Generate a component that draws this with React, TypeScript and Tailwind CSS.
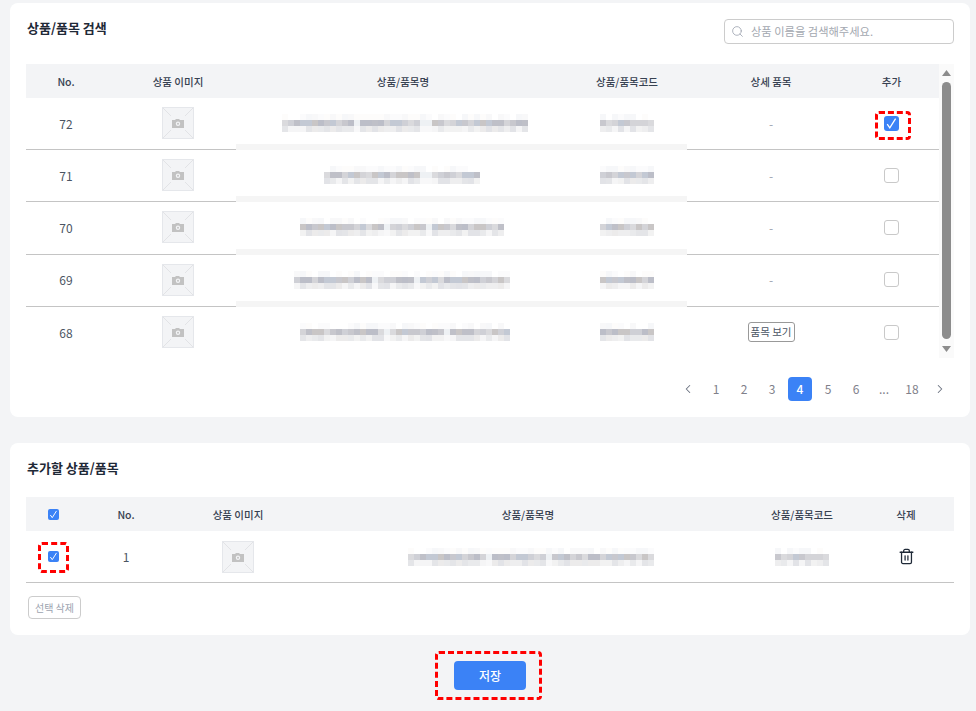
import React from 'react';
import { ChevronLeft, ChevronRight, Search, Trash2 } from 'lucide-react';

const blurColors = ['#c8c8ce', '#cfd0d6', '#bfc0c8', '#c9c6c6', '#c3c9d4', '#d4d4d8', '#bcbec8', '#dadadd'];
const blurLight = ['#e9eaec', '#eeeeef', '#e4e5e8', '#f2f2f2', '#ecebeb', '#f5f5f6', '#e2e3e7'];
const blurTop = ['#ffffff', '#fbfbfc', '#f8f8f9', '#fdfcfb', '#f6f7f9'];

// 모자이크 처리된 텍스트
const Mosaic: React.FC<{ cols: number; gaps?: number[]; seed: number }> = ({ cols, gaps = [], seed }) => {
  let s = seed;
  const next = (n: number) => {
    s = (s * 9301 + 49297) % 233280;
    return Math.floor((s / 233280) * n);
  };
  const rects: React.ReactNode[] = [];
  for (let c = 0; c < cols; c += 1) {
    const gap = gaps.includes(c);
    rects.push(<rect key={`t${c}`} x={c * 6} y={0} width={6} height={6} fill={blurTop[next(5)]} />);
    rects.push(<rect key={`m${c}`} x={c * 6} y={6} width={6} height={6} fill={gap ? '#eef1f4' : blurColors[next(8)]} />);
    rects.push(<rect key={`b${c}`} x={c * 6} y={12} width={6} height={6} fill={gap ? '#f8f8f9' : blurLight[next(7)]} />);
  }
  return (
    <svg width={cols * 6} height={18} className="block">
      {rects}
    </svg>
  );
};

const Thumb = () => (
  <svg width="32" height="32" viewBox="0 0 32 32" className="block">
    <rect x="0.5" y="0.5" width="31" height="31" fill="#f3f4f6" stroke="#e5e7eb" />
    <path d="M1 1l8 8M31 1l-8 8M1 31l8-8M31 31l-8-8" stroke="#e2e3e6" strokeWidth="1" />
    <path d="M10 13h3l1-1h3l1 1h4v8H10z" fill="#c2c2c2" />
    <circle cx="16" cy="16.8" r="2.2" fill="#f3f4f6" />
    <circle cx="16" cy="16.8" r="1" fill="#c2c2c2" />
  </svg>
);

const Check: React.FC<{ checked?: boolean; small?: boolean }> = ({ checked, small }) => {
  const size = small ? 'h-[11px] w-[11px] rounded-[2px]' : 'h-[15px] w-[15px] rounded-[3px]';
  if (!checked) {
    return <span className={`block ${size} border border-[#c9c9c9] bg-white`} />;
  }
  return (
    <span className={`flex items-center justify-center ${size} bg-[#3b82f6]`}>
      <svg viewBox="0 0 15 15" className="h-full w-full">
        <path d="M3.2 8.2l2.6 3.6L11.6 2.6" fill="none" stroke="#ffffff" strokeWidth="1.3" />
      </svg>
    </span>
  );
};

const Highlight: React.FC<{ className: string }> = ({ className }) => (
  <span className={`pointer-events-none absolute rounded-[4px] border-[3px] border-dashed border-[#ff0000] ${className}`} />
);

const rows = [
  { no: 72, cols: 41, gaps: [12, 23, 24], seed: 11, shift: 'ml-[4px]', checked: true },
  { no: 71, cols: 26, gaps: [16, 17], seed: 47, shift: 'mr-[2px]' },
  { no: 70, cols: 34, gaps: [14, 21], seed: 93, shift: 'mr-[2px]' },
  { no: 69, cols: 36, gaps: [13, 20], seed: 131, shift: 'mr-[2px]' },
  { no: 68, cols: 35, gaps: [14, 24], seed: 177, shift: 'ml-[4px]', detail: true },
];

const pages = ['1', '2', '3', '4', '5', '6', '...', '18'];

const App = () => {
  return (
    <div className="h-[711px] overflow-hidden bg-[#f3f4f6] pl-[10px] pr-[6px] pt-[3px] font-['Noto_Sans_CJK_KR','Noto_Sans',sans-serif] text-[12px] text-[#4b5563]">
      <section className="rounded-lg bg-white px-4 pb-4 pt-4">
        <div className="flex items-start justify-between">
          <h2 className="pl-[1px] text-[13px] font-bold leading-[18px] text-[#1f2937]">상품/품목 검색</h2>
          <div className="flex h-[25px] w-[230px] items-center gap-[7px] rounded-[4px] border border-[#cccccc] bg-white px-[6px]">
            <Search size={13} strokeWidth={1.5} className="text-[#9ca3af]" />
            <span className="text-[11.25px] leading-none text-[#a3a8b0]">상품 이름을 검색해주세요.</span>
          </div>
        </div>

        <div className="mt-5 flex h-[294px]">
          <div className="w-[913px]">
            <div className="grid h-[34px] grid-cols-[80px_144px_306px_142px_146px_95px] items-center bg-[#f3f4f6] pt-[1px] text-center text-[10.5px] font-medium text-[#374151]">
              <div>No.</div>
              <div>상품 이미지</div>
              <div>상품/품목명</div>
              <div>상품/품목코드</div>
              <div>상세 품목</div>
              <div>추가</div>
            </div>
            {rows.map((row, idx) => {
              const last = idx === rows.length - 1;
              return (
                <div
                  key={row.no}
                  className={`relative grid h-[52.2px] grid-cols-[80px_144px_306px_142px_146px_95px] items-center pb-[1px] text-center ${last ? '' : 'border-b border-[#c4c4c4]'}`}
                >
                  <div className="pt-[1px]">{row.no}</div>
                  <div className="flex justify-center">
                    <Thumb />
                  </div>
                  <div className="flex justify-center">
                    <div className={row.shift}>
                      <Mosaic cols={row.cols} gaps={row.gaps} seed={row.seed} />
                    </div>
                  </div>
                  <div className="flex justify-center">
                    <Mosaic cols={9} seed={row.seed + 5} />
                  </div>
                  <div className="flex justify-center">
                    {row.detail ? (
                      <button type="button" className="h-5 w-[47px] rounded-[3px] border border-[#999999] text-[10.5px] leading-none text-[#4b5563]">
                        품목 보기
                      </button>
                    ) : (
                      <span className="pt-[1px] text-[#9ca3af]">-</span>
                    )}
                  </div>
                  <div className="relative flex justify-center">
                    <Check checked={row.checked} />
                    {row.checked && <Highlight className="left-[31px] top-[-5px] h-[29px] w-[36px]" />}
                  </div>
                  {!last && <span className="absolute bottom-[-1px] left-[210px] h-[6px] w-[451px] bg-[#f5f5f5]" />}
                </div>
              );
            })}
          </div>

          <div className="flex h-[294px] w-[15px] flex-col items-center bg-[#fafafa]">
            <svg width="9" height="6" viewBox="0 0 9 6" className="mt-[6px] shrink-0">
              <path d="M4.5 0L9 6H0z" fill="#8c8c8c" />
            </svg>
            <div className="mt-[6px] h-[257px] w-[9px] shrink-0 rounded-full bg-[#8c8c8c]" />
            <svg width="9" height="6" viewBox="0 0 9 6" className="mt-[7px] shrink-0">
              <path d="M0 0h9L4.5 6z" fill="#8c8c8c" />
            </svg>
          </div>
        </div>

        <div className="mt-[19px] flex items-center justify-end gap-1 pr-[2px]">
          <span className="flex h-6 w-6 items-center justify-center text-[#6b7280]">
            <ChevronLeft size={14} strokeWidth={1.8} />
          </span>
          {pages.map((page) => (
            <span
              key={page}
              className={`flex h-6 w-6 items-center justify-center rounded-[4px] ${page === '4' ? 'bg-[#3b82f6] font-medium text-white' : 'text-[#80808a]'}`}
            >
              {page}
            </span>
          ))}
          <span className="flex h-6 w-6 items-center justify-center text-[#6b7280]">
            <ChevronRight size={14} strokeWidth={1.8} />
          </span>
        </div>
      </section>

      <section className="mt-[26px] rounded-lg bg-white px-4 pb-4 pt-4">
        <h2 className="pl-[1px] text-[13px] font-bold leading-[18px] text-[#1f2937]">추가할 상품/품목</h2>
        <div className="mt-5">
          <div className="grid h-[34px] grid-cols-[54px_92px_132px_448px_100px_102px] items-center bg-[#f3f4f6] pt-[1px] text-center text-[10.5px] font-medium text-[#374151]">
            <div className="flex justify-center">
              <Check checked small />
            </div>
            <div>No.</div>
            <div>상품 이미지</div>
            <div>상품/품목명</div>
            <div>상품/품목코드</div>
            <div className="pl-[6px]">삭제</div>
          </div>
          <div className="grid h-[52px] grid-cols-[54px_92px_132px_448px_100px_102px] items-center border-b border-[#c4c4c4] text-center">
            <div className="relative flex justify-center">
              <Check checked small />
              <Highlight className="left-[12px] top-[-9px] h-[31px] w-[31px]" />
            </div>
            <div>1</div>
            <div className="flex justify-center">
              <Thumb />
            </div>
            <div className="flex justify-center">
              <div className="ml-[6px]">
                <Mosaic cols={41} gaps={[13, 23]} seed={11} />
              </div>
            </div>
            <div className="flex justify-center">
              <Mosaic cols={9} seed={16} />
            </div>
            <div className="flex justify-center pl-[6px] text-[#1f2937]">
              <Trash2 size={17} strokeWidth={1.8} />
            </div>
          </div>
        </div>
        <button type="button" className="ml-[2px] mt-[13px] block h-[23px] w-[53px] rounded-[4px] border border-[#cccccc] text-[10px] leading-none text-[#9ca3af]">
          선택 삭제
        </button>
      </section>

      <div className="mt-[26px] flex justify-center">
        <div className="relative">
          <button type="button" className="block h-[29px] w-[72px] rounded-[4px] bg-[#3b82f6] text-[12px] font-medium text-white">
            저장
          </button>
          <Highlight className="bottom-[-10px] left-[-19px] right-[-16px] top-[-10px]" />
        </div>
      </div>
    </div>
  );
};

export default App;
